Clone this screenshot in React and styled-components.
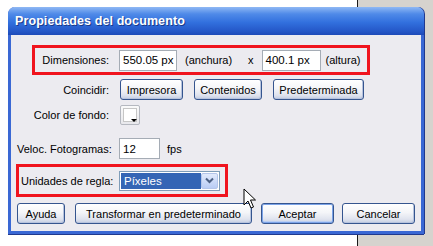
import React from "react"
import styled, { createGlobalStyle } from "styled-components"

const Global = createGlobalStyle`
  html, body {
    margin: 0;
    padding: 0;
  }
  body {
    width: 433px;
    height: 246px;
    overflow: hidden;
    background: linear-gradient(to right, #ffffff 0, #ffffff 357px, #1a1a1a 357px, #1a1a1a 358px, #d6d3ce 358px);
    font-family: "Liberation Sans", Arial, sans-serif;
    font-size: 11px;
    color: #000;
  }
`

const Stage = styled.div`
  position: relative;
  padding: 7px 0 0 8px;
`

const Window = styled.div`
  width: 416px;
  height: 227px;
  box-sizing: border-box;
  border: 3px solid #3a68d4;
  border-top: none;
  border-radius: 7px 7px 0 0;
  background: #ecebf0;
  display: flex;
  flex-direction: column;
  box-shadow: 1px 0 0 #20398f, 0 1px 0 #20398f;
`

const TitleBar = styled.div`
  height: 28px;
  margin: 0 -3px;
  border-radius: 7px 7px 0 0;
  background: linear-gradient(to bottom, #8fb8f4 0%, #4f8ae8 25%, #3270de 55%, #2558c9 85%, #1d4ab8 100%);
  display: flex;
  align-items: center;
  padding-left: 7px;
  color: #fff;
  font-weight: bold;
  font-size: 12.5px;
  letter-spacing: 0.1px;
  text-shadow: 1px 1px 0 #1a3a8a;
`

const Body = styled.div`
  flex: 1;
  padding: 10px 6px 0 6px;
  display: flex;
  flex-direction: column;
`

const Row = styled.div`
  display: flex;
  align-items: center;
  height: ${p => p.$h || 21}px;
  margin-top: ${p => p.$mt || 0}px;
`

const RedBox = styled.div`
  display: flex;
  align-items: center;
  border: 3px solid #f0141e;
  height: ${p => p.$h || 30}px;
  box-sizing: border-box;
  margin-top: ${p => p.$mt || 0}px;
  margin-left: ${p => p.$ml}px;
  width: ${p => p.$w}px;
  padding-left: ${p => p.$pl || 0}px;
`

const Label = styled.span`
  display: inline-block;
  width: ${p => p.$w}px;
  text-align: ${p => p.$align || "right"};
  margin-right: ${p => p.$mr || 10}px;
  white-space: nowrap;
`

const Text = styled.span`
  margin: 0 ${p => p.$mx || 0}px;
  white-space: nowrap;
`

const Input = styled.div`
  width: ${p => p.$w}px;
  height: 21px;
  box-sizing: border-box;
  background: #fff;
  border: 1px solid #a5acb5;
  font-size: 11.5px;
  display: flex;
  align-items: center;
  padding-left: 3px;
`

const Button = styled.div`
  width: ${p => p.$w}px;
  height: 21px;
  box-sizing: border-box;
  margin-right: ${p => p.$mr || 0}px;
  border: 1px solid #35558f;
  border-radius: 3px;
  background: linear-gradient(to bottom, #ffffff 0%, #f4f5f8 45%, #dfe3ee 80%, #c4cde2 100%);
  box-shadow: ${p => p.$default
    ? "inset 0 0 0 1px #7ba3e8, inset 0 -2px 0 #b9cdf3"
    : "inset -1px -1px 0 #b7c3dd"};
  display: flex;
  align-items: center;
  justify-content: center;
  font-size: 11px;
  white-space: nowrap;
`

const Swatch = styled.div`
  width: 20px;
  height: 20px;
  box-sizing: border-box;
  border: 1px solid #b5b8c0;
  border-radius: 2px;
  background: linear-gradient(to bottom, #fafafa, #e8e8ec);
  position: relative;
  &::before {
    content: "";
    position: absolute;
    left: 2px;
    top: 2px;
    width: 12px;
    height: 12px;
    background: #fff;
    border: 1px solid #c6c6c6;
  }
  &::after {
    content: "";
    position: absolute;
    right: 2px;
    bottom: 2px;
    border-left: 3px solid transparent;
    border-right: 3px solid transparent;
    border-top: 3px solid #000;
  }
`

const Select = styled.div`
  width: 101px;
  height: 20px;
  box-sizing: border-box;
  border: 1px solid #7f9db9;
  background: #fff;
  display: flex;
  padding: 1px;
`

const Selected = styled.div`
  flex: 1;
  background: #3465b5;
  color: #fff;
  font-size: 11.5px;
  display: flex;
  align-items: center;
  padding-left: 3px;
`

const DropButton = styled.div`
  width: 15px;
  border: 1px solid #b4c5ea;
  border-radius: 2px;
  background: linear-gradient(to bottom, #e2eafc, #b9ccf5);
  display: flex;
  align-items: center;
  justify-content: center;
`

const Footer = styled.div`
  display: flex;
  align-items: center;
  margin-top: 6px;
`

const Cursor = styled.svg`
  position: absolute;
  left: 243px;
  top: 188px;
`

const App = () => (
  <Stage>
    <Global />
    <Window>
      <TitleBar>Propiedades del documento</TitleBar>
      <Body>
        <RedBox $ml={15} $w={338}>
          <Label $w={74}>Dimensiones:</Label>
          <Input $w={58}>550.05 px</Input>
          <Text $mx={8}>(anchura)</Text>
          <Text $mx={8}>x</Text>
          <Input $w={59}>400.1 px</Input>
          <Text $mx={5}>(altura)</Text>
        </RedBox>
        <Row $mt={4}>
          <Label $w={92} $mr={11}>Coincidir:</Label>
          <Button $w={63} $mr={11}>Impresora</Button>
          <Button $w={68} $mr={11}>Contenidos</Button>
          <Button $w={91}>Predeterminada</Button>
        </Row>
        <Row $mt={5} $h={20}>
          <Label $w={92} $mr={11}>Color de fondo:</Label>
          <Swatch />
        </Row>
        <Row $mt={13}>
          <Label $w={92} $mr={10}>Veloc. Fotogramas:</Label>
          <Input $w={41}>12</Input>
          <Text $mx={7}>fps</Text>
        </Row>
        <RedBox $ml={-1} $w={212} $pl={2} $mt={5} $h={33}>
          <Label $w={92} $mr={6} $align="left">Unidades de regla:</Label>
          <Select>
            <Selected>Píxeles</Selected>
            <DropButton>
              <svg width="9" height="7" viewBox="0 0 9 7">
                <path d="M1 1.5 L4.5 5 L8 1.5" fill="none" stroke="#4d6185" strokeWidth="2" />
              </svg>
            </DropButton>
          </Select>
        </RedBox>
        <Footer>
          <Button $w={48} $mr={10}>Ayuda</Button>
          <Button $w={177} $mr={9}>Transformar en predeterminado</Button>
          <Button $w={73} $mr={8} $default>Aceptar</Button>
          <Button $w={73}>Cancelar</Button>
        </Footer>
      </Body>
    </Window>
    <Cursor width="14" height="22" viewBox="0 0 14 22">
      <path d="M1 1 L1 17 L5 13 L8 20 L10.5 19 L7.5 12 L12.5 12 Z" fill="#fff" stroke="#000" strokeWidth="1" strokeLinejoin="miter" />
    </Cursor>
  </Stage>
)

export default App
